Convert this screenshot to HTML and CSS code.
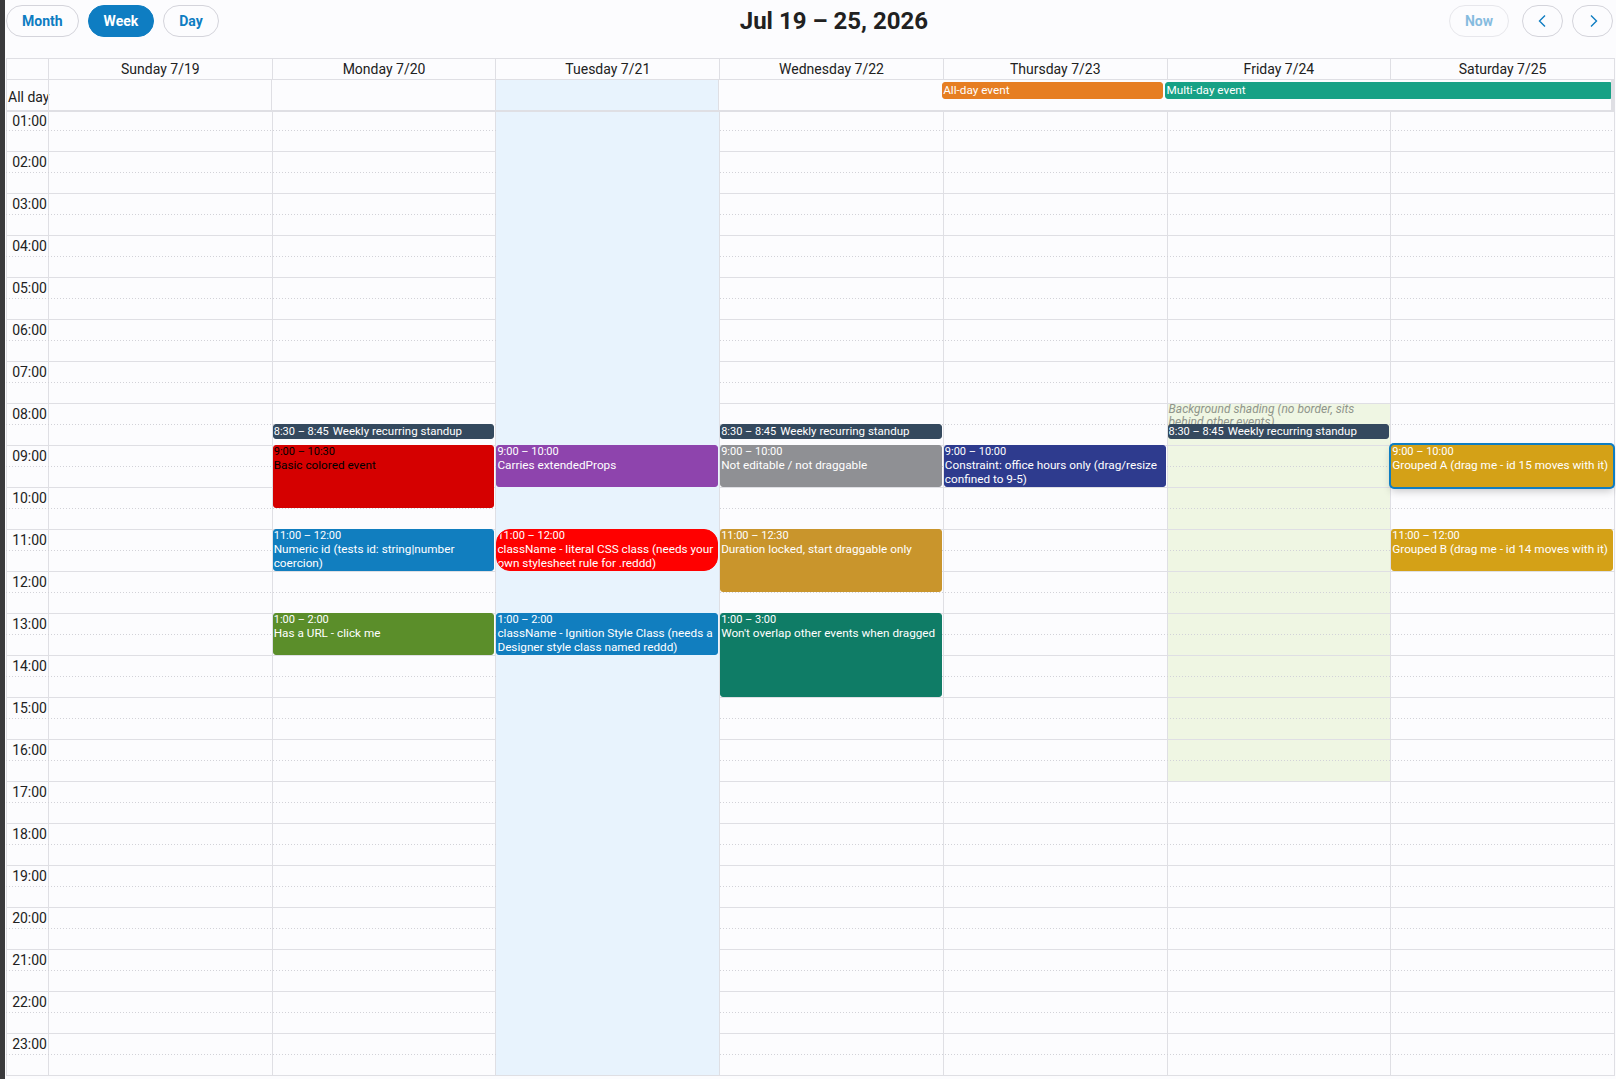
FILE: index.html
```html
<!DOCTYPE html>
<html lang="en">
<head>
<meta charset="utf-8">
<title>Calendar</title>
<link rel="stylesheet" href="styles.css">
</head>
<body>
<div class="page">
  <div class="strip"></div>
  <div class="cal">
    <div class="toolbar">
      <div class="group">
        <button class="btn">Month</button>
        <button class="btn active">Week</button>
        <button class="btn">Day</button>
      </div>
      <h2 class="title">Jul 19 – 25, 2026</h2>
      <div class="group">
        <button class="btn disabled">Now</button>
        <button class="btn icon" aria-label="prev"><svg width="16" height="16" viewBox="0 0 16 16"><path d="M10 2.5 L4.5 8 L10 13.5" fill="none" stroke="#0e7dc2" stroke-width="1.4"/></svg></button>
        <button class="btn icon" aria-label="next"><svg width="16" height="16" viewBox="0 0 16 16"><path d="M6 2.5 L11.5 8 L6 13.5" fill="none" stroke="#0e7dc2" stroke-width="1.4"/></svg></button>
      </div>
    </div>

    <div class="grid">
      <div class="head">
        <div class="hc"></div>
        <div class="hc">Sunday 7/19</div>
        <div class="hc">Monday 7/20</div>
        <div class="hc">Tuesday 7/21</div>
        <div class="hc">Wednesday 7/22</div>
        <div class="hc">Thursday 7/23</div>
        <div class="hc">Friday 7/24</div>
        <div class="hc">Saturday 7/25</div>
      </div>

      <div class="allday">
        <div class="ac lbl">All day</div>
        <div class="ac"></div>
        <div class="ac"></div>
        <div class="ac today"></div>
        <div class="ac"></div>
        <div class="ac"></div>
        <div class="ac"></div>
        <div class="ac"></div>
        <div class="ade thu">All-day event</div>
        <div class="ade multi">Multi-day event</div>
      </div>

      <div class="body">
        <div class="bgl">
          <div class="bc"></div>
          <div class="bc"></div>
          <div class="bc"></div>
          <div class="bc"></div>
          <div class="bc"></div>
          <div class="bc"></div>
          <div class="bc"><div class="bgev" style="top:291px;height:378px">Background shading (no border, sits behind other events)</div></div>
          <div class="bc"></div>
        </div>

        <div class="rows">
          <div class="hr first"><div class="tl">01:00</div></div>
          <div class="hr"><div class="tl">02:00</div></div>
          <div class="hr"><div class="tl">03:00</div></div>
          <div class="hr"><div class="tl">04:00</div></div>
          <div class="hr"><div class="tl">05:00</div></div>
          <div class="hr"><div class="tl">06:00</div></div>
          <div class="hr"><div class="tl">07:00</div></div>
          <div class="hr"><div class="tl">08:00</div></div>
          <div class="hr"><div class="tl">09:00</div></div>
          <div class="hr"><div class="tl">10:00</div></div>
          <div class="hr"><div class="tl">11:00</div></div>
          <div class="hr"><div class="tl">12:00</div></div>
          <div class="hr"><div class="tl">13:00</div></div>
          <div class="hr"><div class="tl">14:00</div></div>
          <div class="hr"><div class="tl">15:00</div></div>
          <div class="hr"><div class="tl">16:00</div></div>
          <div class="hr"><div class="tl">17:00</div></div>
          <div class="hr"><div class="tl">18:00</div></div>
          <div class="hr"><div class="tl">19:00</div></div>
          <div class="hr"><div class="tl">20:00</div></div>
          <div class="hr"><div class="tl">21:00</div></div>
          <div class="hr"><div class="tl">22:00</div></div>
          <div class="hr"><div class="tl">23:00</div></div>
        </div>

        <div class="evl">
          <div class="spacer"></div>
          <div class="col"></div>
          <div class="col">
            <div class="ev short c-slate" style="top:312px;height:15px"><span class="t">8:30 – 8:45</span><span class="n">Weekly recurring standup</span></div>
            <div class="ev c-red" style="top:333px;height:63px"><div class="t">9:00 – 10:30</div><div class="n">Basic colored event</div></div>
            <div class="ev c-blue" style="top:417px;height:42px"><div class="t">11:00 – 12:00</div><div class="n">Numeric id (tests id: string|number coercion)</div></div>
            <div class="ev c-green" style="top:501px;height:42px"><div class="t">1:00 – 2:00</div><div class="n">Has a URL - click me</div></div>
          </div>
          <div class="col today">
            <div class="ev c-purple" style="top:333px;height:42px"><div class="t">9:00 – 10:00</div><div class="n">Carries extendedProps</div></div>
            <div class="ev c-pill" style="top:417px;height:42px"><div class="t">11:00 – 12:00</div><div class="n">className - literal CSS class (needs your own stylesheet rule for .reddd)</div></div>
            <div class="ev c-blue" style="top:501px;height:42px"><div class="t">1:00 – 2:00</div><div class="n">className - Ignition Style Class (needs a Designer style class named reddd)</div></div>
          </div>
          <div class="col">
            <div class="ev short c-slate" style="top:312px;height:15px"><span class="t">8:30 – 8:45</span><span class="n">Weekly recurring standup</span></div>
            <div class="ev c-gray" style="top:333px;height:42px"><div class="t">9:00 – 10:00</div><div class="n">Not editable / not draggable</div></div>
            <div class="ev c-ochre" style="top:417px;height:63px"><div class="t">11:00 – 12:30</div><div class="n">Duration locked, start draggable only</div></div>
            <div class="ev c-teal" style="top:501px;height:84px"><div class="t">1:00 – 3:00</div><div class="n">Won't overlap other events when dragged</div></div>
          </div>
          <div class="col">
            <div class="ev c-navy" style="top:333px;height:42px"><div class="t">9:00 – 10:00</div><div class="n">Constraint: office hours only (drag/resize confined to 9-5)</div></div>
          </div>
          <div class="col">
            <div class="ev short c-slate" style="top:312px;height:15px"><span class="t">8:30 – 8:45</span><span class="n">Weekly recurring standup</span></div>
          </div>
          <div class="col">
            <div class="ev c-gold sel" style="top:333px;height:42px"><div class="t">9:00 – 10:00</div><div class="n">Grouped A (drag me - id 15 moves with it)</div></div>
            <div class="ev c-gold" style="top:417px;height:42px"><div class="t">11:00 – 12:00</div><div class="n">Grouped B (drag me - id 14 moves with it)</div></div>
          </div>
        </div>
      </div>
    </div>
  </div>
</div>
</body>
</html>
```

FILE: styles.css
```css
* { box-sizing: border-box; }

html, body {
  margin: 0;
  padding: 0;
  background: #fcfcfe;
  font-family: Roboto, "Liberation Sans", Arial, sans-serif;
  color: #212121;
}

.page {
  display: flex;
  height: 1079px;
  overflow: hidden;
}

.strip {
  flex: none;
  width: 5px;
  background: #3a3a3c;
}

.cal {
  flex: none;
  width: 1609px;
  margin-left: 1px;
}

/* toolbar */
.toolbar {
  display: flex;
  justify-content: space-between;
  align-items: center;
  height: 37px;
  padding: 5px 2px 0 0;
  margin-bottom: 21px;
}

.group {
  display: flex;
  align-items: center;
  gap: 9px;
}

.btn {
  height: 32px;
  padding: 0 15px;
  border: 1px solid #d4d4db;
  border-radius: 16px;
  background: transparent;
  color: #0e7dc2;
  font-family: Roboto, "Liberation Sans", Arial, sans-serif;
  font-size: 14px;
  font-weight: 700;
  line-height: 30px;
  cursor: pointer;
}

.btn.active {
  background: #0e7dc2;
  border-color: #0e7dc2;
  color: #ffffff;
}

.btn.disabled {
  opacity: 0.5;
  margin-right: 4px;
}

.btn.icon {
  width: 41px;
  padding: 0;
  display: flex;
  align-items: center;
  justify-content: center;
}

.title {
  margin: 0;
  font-size: 24px;
  font-weight: 700;
  line-height: 32px;
  color: #212121;
}

/* grid */
.grid {
  border-right: 1px solid #dfdfe4;
}

.head,
.allday,
.bgl,
.evl {
  display: grid;
  grid-template-columns: 42px repeat(7, 1fr);
}

.head {
  border-top: 1px solid #dfdfe4;
  border-bottom: 1px solid #dfdfe4;
}

.hc {
  height: 20px;
  line-height: 20px;
  border-left: 1px solid #dfdfe4;
  text-align: center;
  font-size: 14px;
  white-space: nowrap;
}

.allday {
  height: 32px;
  border-bottom: 2px solid #dfdfe4;
}

.ac {
  grid-row: 1;
  border-left: 1px solid #dfdfe4;
}

.ac.today { background: #e8f3fd; }

.ac.lbl {
  display: flex;
  align-items: flex-end;
  padding: 0 0 5px 1px;
  font-size: 14px;
  line-height: 16px;
  white-space: nowrap;
}

.ade {
  grid-row: 1;
  align-self: start;
  height: 17px;
  margin: 2px 1px 0 1px;
  padding: 0;
  border: 1px solid;
  border-radius: 3px;
  color: #ffffff;
  font-size: 11.75px;
  line-height: 15px;
  white-space: nowrap;
  overflow: hidden;
}

.ade.thu {
  grid-column: 6 / 7;
  background: #e67e22;
  border-color: #e67e22;
}

.ade.multi {
  grid-column: 7 / 9;
  background: #17a185;
  border-color: #17a185;
  border-top-right-radius: 0;
  border-bottom-right-radius: 0;
  margin-right: 0;
}

/* body */
.body {
  position: relative;
  border-bottom: 1px solid #dfdfe4;
}

.bgl {
  position: absolute;
  inset: 0;
  z-index: 0;
}

.bc {
  position: relative;
  border-left: 1px solid #dfdfe4;
}

.bgev {
  position: absolute;
  left: 0;
  right: 0;
  padding: 0 1px;
  background: #eff6e3;
  color: #8f958b;
  font-size: 12px;
  font-style: italic;
  line-height: 13px;
  overflow: hidden;
}

.rows {
  position: relative;
  z-index: 1;
}

.hr {
  height: 42px;
  border-top: 1px solid #dfdfe4;
  background-image: linear-gradient(to right, #d2d2d8 50%, transparent 50%);
  background-size: 3px 1px;
  background-repeat: repeat-x;
  background-position: 0 20px;
}

.hr.first {
  height: 39px;
  border-top: 0;
  background-position: 0 18px;
}

.tl {
  width: 42px;
  height: 20px;
  padding-right: 1px;
  line-height: 20px;
  text-align: right;
  font-size: 14px;
}

.hr.first .tl {
  height: 18px;
  line-height: 18px;
}

.evl {
  position: absolute;
  inset: 0;
  z-index: 2;
}

.col {
  position: relative;
  border-left: 1px solid transparent;
  background-clip: padding-box;
}

.col.today { background-color: #e8f3fd; }

.ev {
  position: absolute;
  left: 0;
  right: 1px;
  padding: 0;
  border: 1px solid;
  border-radius: 3px;
  color: #ffffff;
  overflow: hidden;
}

.ev .t {
  font-size: 11px;
  line-height: 12px;
  white-space: nowrap;
}

.ev .n {
  font-size: 11.75px;
  line-height: 14.4px;
}

.ev.short {
  display: flex;
  align-items: baseline;
  gap: 4px;
  white-space: nowrap;
}

.ev.short .t,
.ev.short .n {
  line-height: 13px;
}

.ev.short .n { font-size: 11.5px; }

.c-slate  { background: #34495e; border-color: #34495e; }
.c-red    { background: #d50000; border-color: #d50000; color: #000000; }
.c-blue   { background: #117ebf; border-color: #117ebf; }
.c-green  { background: #5b8e2a; border-color: #5b8e2a; }
.c-purple { background: #8e44ad; border-color: #8e44ad; }
.c-pill   { background: #ff0000; border-color: #ff0000; border-radius: 14px; }
.c-gray   { background: #8f9094; border-color: #8f9094; }
.c-ochre  { background: #c9952c; border-color: #c9952c; }
.c-teal   { background: #0f7c66; border-color: #0f7c66; }
.c-navy   { background: #2e3b8e; border-color: #2e3b8e; }
.c-gold   { background: #d4a117; border-color: #d4a117; }

.ev.sel {
  box-shadow: 0 0 0 2px #0e7dc2, 0 4px 8px rgba(0, 0, 0, 0.22);
  z-index: 3;
}
```
